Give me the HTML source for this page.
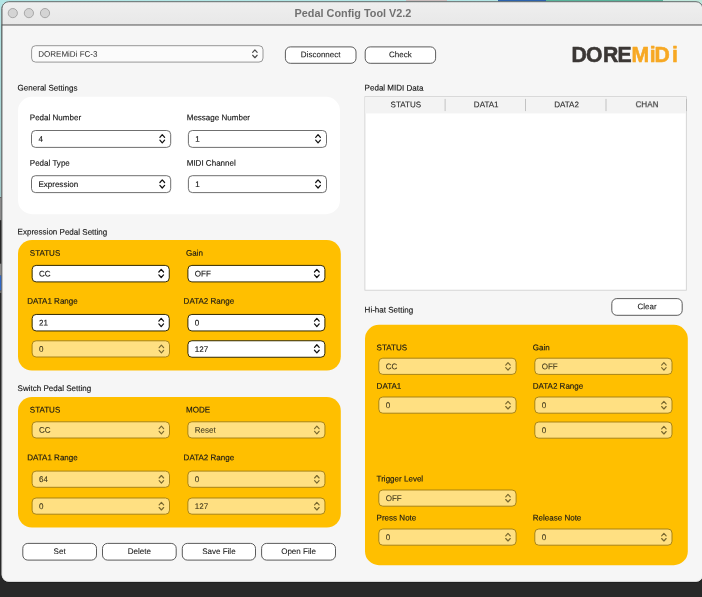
<!DOCTYPE html>
<html><head><meta charset="utf-8"><title>Pedal Config Tool V2.2</title>
<style>
*{box-sizing:border-box;margin:0;padding:0}
html,body{width:702px;height:597px;overflow:hidden}
body{position:relative;background:#282828;font-family:"Liberation Sans",sans-serif;--sx:.988}
svg.bg{position:absolute;left:0;top:0;will-change:transform}
.t{position:absolute;left:0;top:0;white-space:nowrap;font-size:8.15px;line-height:11px;color:#161616;transform-origin:0 0;-webkit-text-stroke:.14px #161616}
.t.c{width:200px;text-align:center;transform-origin:50% 0}
.t.th{color:#282828;-webkit-text-stroke:.1px #282828}
.t.bt{-webkit-text-stroke:.08px #161616}
.t.ds{color:#40381c;-webkit-text-stroke:.1px #40381c}
.t.dv{color:#2e2e2e;-webkit-text-stroke:0}
.txt{position:absolute;left:0;top:0;width:702px;height:597px;will-change:transform}
.title{position:absolute;left:0;width:706px;top:6.5px;text-align:center;font-weight:bold;font-size:11px;line-height:13px;color:#717171;transform:translateY(-.3px) scaleX(.987)}
</style></head><body>
<svg class="bg" width="702" height="597" viewBox="0 0 702 597">
<defs>
<linearGradient id="tb" x1="0" y1="0" x2="0" y2="1"><stop offset="0" stop-color="#efefef"/><stop offset="1" stop-color="#e8e8e8"/></linearGradient>
<linearGradient id="ls" x1="0" y1="0" x2="0" y2="1"><stop offset="0" stop-color="#b4e6e6"/><stop offset="1" stop-color="#9fc6c6"/></linearGradient>
<linearGradient id="bd" x1="0" y1="0" x2="0" y2="1"><stop offset="0" stop-color="#3c4646"/><stop offset="0.5" stop-color="#777"/><stop offset="1" stop-color="#e0e0e0"/></linearGradient>
<clipPath id="wc"><rect x="1.7" y="1.4" width="701.3" height="580.3" rx="7"/></clipPath>
</defs>
<!-- desktop peeking out -->
<rect x="0" y="0" width="702" height="40" fill="#b2e6e5"/>
<rect x="406" y="0" width="41" height="3" fill="#c9bcbc"/>
<rect x="498" y="0" width="48" height="3" fill="#2b62ad"/>
<rect x="546" y="0" width="117" height="3" fill="#58b39a"/>
<rect x="663" y="0" width="39" height="3" fill="#bfe8dc"/>
<rect x="0" y="0" width="4" height="197" fill="url(#ls)"/>
<rect x="0" y="197.4" width="4" height="23" fill="#8a8a8a"/>
<rect x="0" y="220.4" width="4" height="377" fill="#262626"/>
<rect x="0" y="263.7" width="4" height="12" fill="#8a8a8a"/>
<rect x="0" y="275.6" width="4" height="15" fill="#2f66c4"/>
<rect x="0" y="290.5" width="4" height="2.5" fill="#666"/>
<rect x="0" y="293" width="4" height="304" fill="#282828"/>
<!-- window -->
<rect x="1.4" y="2" width="701.9" height="580.6" rx="7.3" fill="#151515"/>
<rect x="1.7" y="1.4" width="701.3" height="580.3" rx="7" fill="#f6f6f6"/>
<g clip-path="url(#wc)">
<rect x="0" y="0" width="706" height="24.4" fill="url(#tb)"/>
<rect x="0" y="24.2" width="706" height="1.5" fill="#858585"/>
</g>
<rect x="2" y="1.7" width="700.7" height="579.7" rx="6.7" fill="none" stroke="url(#bd)" stroke-width="0.8"/>
<g fill="#d4d4d4" stroke="#a0a0a0" stroke-width="0.9">
<circle cx="12.8" cy="13.1" r="4.6"/><circle cx="28.9" cy="13.1" r="4.6"/><circle cx="45" cy="13.1" r="4.6"/>
</g>
<rect x="31.60" y="45.70" width="231.40" height="16.40" rx="4" fill="#fbfbfb" stroke="#8c8c8c" stroke-width="0.9"/>
<path d="M252.65 52.35L254.90 49.85L257.15 52.35M252.65 55.25L254.90 57.75L257.15 55.25" fill="none" stroke="#4a4a4a" stroke-width="1.15" stroke-linecap="round" stroke-linejoin="round"/>
<rect x="285.40" y="46.90" width="70.60" height="16.40" rx="5" fill="#fff" stroke="#4a4a4a" stroke-width="0.9"/>
<rect x="365.20" y="46.90" width="70.40" height="16.40" rx="5" fill="#fff" stroke="#4a4a4a" stroke-width="0.9"/>
<rect x="18" y="96.8" width="322" height="117.4" rx="14" fill="#fff"/>
<rect x="31.50" y="130.50" width="139.20" height="16.90" rx="4" fill="#fff" stroke="#4a4a4a" stroke-width="0.8"/>
<path d="M159.90 137.30L162.25 134.70L164.60 137.30M159.90 140.20L162.25 142.80L164.60 140.20" fill="none" stroke="#111" stroke-width="1.25" stroke-linecap="round" stroke-linejoin="round"/>
<rect x="188.40" y="130.50" width="138.10" height="16.90" rx="4" fill="#fff" stroke="#4a4a4a" stroke-width="0.8"/>
<path d="M315.70 137.30L318.05 134.70L320.40 137.30M315.70 140.20L318.05 142.80L320.40 140.20" fill="none" stroke="#111" stroke-width="1.25" stroke-linecap="round" stroke-linejoin="round"/>
<rect x="31.50" y="175.70" width="139.20" height="16.90" rx="4" fill="#fff" stroke="#4a4a4a" stroke-width="0.8"/>
<path d="M159.90 182.50L162.25 179.90L164.60 182.50M159.90 185.40L162.25 188.00L164.60 185.40" fill="none" stroke="#111" stroke-width="1.25" stroke-linecap="round" stroke-linejoin="round"/>
<rect x="188.40" y="175.70" width="138.10" height="16.90" rx="4" fill="#fff" stroke="#4a4a4a" stroke-width="0.8"/>
<path d="M315.70 182.50L318.05 179.90L320.40 182.50M315.70 185.40L318.05 188.00L320.40 185.40" fill="none" stroke="#111" stroke-width="1.25" stroke-linecap="round" stroke-linejoin="round"/>
<rect x="18" y="240" width="322.8" height="130.6" rx="14" fill="#ffbf00"/>
<rect x="32.15" y="265.40" width="137.10" height="16.50" rx="4" fill="#fff" stroke="#332a00" stroke-width="1"/>
<path d="M158.85 272.00L161.20 269.40L163.55 272.00M158.85 274.90L161.20 277.50L163.55 274.90" fill="none" stroke="#111" stroke-width="1.25" stroke-linecap="round" stroke-linejoin="round"/>
<rect x="187.90" y="265.40" width="137.00" height="16.50" rx="4" fill="#fff" stroke="#332a00" stroke-width="1"/>
<path d="M314.50 272.00L316.85 269.40L319.20 272.00M314.50 274.90L316.85 277.50L319.20 274.90" fill="none" stroke="#111" stroke-width="1.25" stroke-linecap="round" stroke-linejoin="round"/>
<rect x="32.15" y="314.45" width="137.10" height="16.50" rx="4" fill="#fff" stroke="#332a00" stroke-width="1"/>
<path d="M158.85 321.05L161.20 318.45L163.55 321.05M158.85 323.95L161.20 326.55L163.55 323.95" fill="none" stroke="#111" stroke-width="1.25" stroke-linecap="round" stroke-linejoin="round"/>
<rect x="187.90" y="314.45" width="137.00" height="16.50" rx="4" fill="#fff" stroke="#332a00" stroke-width="1"/>
<path d="M314.50 321.05L316.85 318.45L319.20 321.05M314.50 323.95L316.85 326.55L319.20 323.95" fill="none" stroke="#111" stroke-width="1.25" stroke-linecap="round" stroke-linejoin="round"/>
<rect x="32.10" y="340.80" width="137.40" height="16.20" rx="4" fill="#ffe082" stroke="#a37f14" stroke-width="0.95"/>
<path d="M159.15 347.70L161.40 345.20L163.65 347.70M159.15 350.30L161.40 352.80L163.65 350.30" fill="none" stroke="#78672e" stroke-width="1.15" stroke-linecap="round" stroke-linejoin="round"/>
<rect x="187.90" y="340.75" width="137.00" height="16.50" rx="4" fill="#fff" stroke="#332a00" stroke-width="1"/>
<path d="M314.50 347.35L316.85 344.75L319.20 347.35M314.50 350.25L316.85 352.85L319.20 350.25" fill="none" stroke="#111" stroke-width="1.25" stroke-linecap="round" stroke-linejoin="round"/>
<rect x="18" y="397.0" width="322.8" height="130.5" rx="14" fill="#ffbf00"/>
<rect x="32.10" y="421.80" width="137.40" height="16.20" rx="4" fill="#ffe082" stroke="#a37f14" stroke-width="0.95"/>
<path d="M159.15 428.70L161.40 426.20L163.65 428.70M159.15 431.30L161.40 433.80L163.65 431.30" fill="none" stroke="#78672e" stroke-width="1.15" stroke-linecap="round" stroke-linejoin="round"/>
<rect x="187.85" y="421.80" width="137.10" height="16.20" rx="4" fill="#ffe082" stroke="#a37f14" stroke-width="0.95"/>
<path d="M314.60 428.70L316.85 426.20L319.10 428.70M314.60 431.30L316.85 433.80L319.10 431.30" fill="none" stroke="#78672e" stroke-width="1.15" stroke-linecap="round" stroke-linejoin="round"/>
<rect x="32.10" y="471.10" width="137.40" height="16.20" rx="4" fill="#ffe082" stroke="#a37f14" stroke-width="0.95"/>
<path d="M159.15 478.00L161.40 475.50L163.65 478.00M159.15 480.60L161.40 483.10L163.65 480.60" fill="none" stroke="#78672e" stroke-width="1.15" stroke-linecap="round" stroke-linejoin="round"/>
<rect x="187.85" y="471.10" width="137.10" height="16.20" rx="4" fill="#ffe082" stroke="#a37f14" stroke-width="0.95"/>
<path d="M314.60 478.00L316.85 475.50L319.10 478.00M314.60 480.60L316.85 483.10L319.10 480.60" fill="none" stroke="#78672e" stroke-width="1.15" stroke-linecap="round" stroke-linejoin="round"/>
<rect x="32.10" y="498.00" width="137.40" height="16.20" rx="4" fill="#ffe082" stroke="#a37f14" stroke-width="0.95"/>
<path d="M159.15 504.90L161.40 502.40L163.65 504.90M159.15 507.50L161.40 510.00L163.65 507.50" fill="none" stroke="#78672e" stroke-width="1.15" stroke-linecap="round" stroke-linejoin="round"/>
<rect x="187.85" y="498.00" width="137.10" height="16.20" rx="4" fill="#ffe082" stroke="#a37f14" stroke-width="0.95"/>
<path d="M314.60 504.90L316.85 502.40L319.10 504.90M314.60 507.50L316.85 510.00L319.10 507.50" fill="none" stroke="#78672e" stroke-width="1.15" stroke-linecap="round" stroke-linejoin="round"/>
<rect x="22.80" y="543.40" width="73.70" height="16.70" rx="5" fill="#fff" stroke="#4a4a4a" stroke-width="0.9"/>
<rect x="102.50" y="543.40" width="73.70" height="16.70" rx="5" fill="#fff" stroke="#4a4a4a" stroke-width="0.9"/>
<rect x="182.30" y="543.40" width="73.20" height="16.70" rx="5" fill="#fff" stroke="#4a4a4a" stroke-width="0.9"/>
<rect x="261.60" y="543.40" width="73.90" height="16.70" rx="5" fill="#fff" stroke="#4a4a4a" stroke-width="0.9"/>
<rect x="364.9" y="96.7" width="321.4" height="193.5" fill="#fff" stroke="#cdcdcd" stroke-width="0.8"/>
<rect x="365.3" y="97.1" width="320.6" height="16.3" fill="#f3f3f3"/>
<rect x="444.65" y="98.9" width="0.9" height="12.2" fill="#bdbdbd"/>
<rect x="525.10" y="98.9" width="0.9" height="12.2" fill="#bdbdbd"/>
<rect x="605.55" y="98.9" width="0.9" height="12.2" fill="#bdbdbd"/>
<rect x="686.00" y="98.9" width="0.9" height="12.2" fill="#bdbdbd"/>
<rect x="611.80" y="298.60" width="70.40" height="16.70" rx="5" fill="#fff" stroke="#4a4a4a" stroke-width="0.9"/>
<rect x="365.0" y="324.8" width="322.8" height="240.4" rx="14" fill="#ffbf00"/>
<rect x="378.80" y="358.20" width="137.30" height="16.20" rx="4" fill="#ffe082" stroke="#a37f14" stroke-width="0.95"/>
<path d="M505.75 365.10L508.00 362.60L510.25 365.10M505.75 367.70L508.00 370.20L510.25 367.70" fill="none" stroke="#78672e" stroke-width="1.15" stroke-linecap="round" stroke-linejoin="round"/>
<rect x="534.80" y="358.20" width="137.20" height="16.20" rx="4" fill="#ffe082" stroke="#a37f14" stroke-width="0.95"/>
<path d="M661.65 365.10L663.90 362.60L666.15 365.10M661.65 367.70L663.90 370.20L666.15 367.70" fill="none" stroke="#78672e" stroke-width="1.15" stroke-linecap="round" stroke-linejoin="round"/>
<rect x="378.80" y="397.00" width="137.30" height="16.20" rx="4" fill="#ffe082" stroke="#a37f14" stroke-width="0.95"/>
<path d="M505.75 403.90L508.00 401.40L510.25 403.90M505.75 406.50L508.00 409.00L510.25 406.50" fill="none" stroke="#78672e" stroke-width="1.15" stroke-linecap="round" stroke-linejoin="round"/>
<rect x="534.80" y="397.00" width="137.20" height="16.20" rx="4" fill="#ffe082" stroke="#a37f14" stroke-width="0.95"/>
<path d="M661.65 403.90L663.90 401.40L666.15 403.90M661.65 406.50L663.90 409.00L666.15 406.50" fill="none" stroke="#78672e" stroke-width="1.15" stroke-linecap="round" stroke-linejoin="round"/>
<rect x="534.80" y="422.00" width="137.20" height="16.20" rx="4" fill="#ffe082" stroke="#a37f14" stroke-width="0.95"/>
<path d="M661.65 428.90L663.90 426.40L666.15 428.90M661.65 431.50L663.90 434.00L666.15 431.50" fill="none" stroke="#78672e" stroke-width="1.15" stroke-linecap="round" stroke-linejoin="round"/>
<rect x="378.80" y="490.00" width="137.30" height="16.20" rx="4" fill="#ffe082" stroke="#a37f14" stroke-width="0.95"/>
<path d="M505.75 496.90L508.00 494.40L510.25 496.90M505.75 499.50L508.00 502.00L510.25 499.50" fill="none" stroke="#78672e" stroke-width="1.15" stroke-linecap="round" stroke-linejoin="round"/>
<rect x="378.80" y="529.00" width="137.30" height="16.20" rx="4" fill="#ffe082" stroke="#a37f14" stroke-width="0.95"/>
<path d="M505.75 535.90L508.00 533.40L510.25 535.90M505.75 538.50L508.00 541.00L510.25 538.50" fill="none" stroke="#78672e" stroke-width="1.15" stroke-linecap="round" stroke-linejoin="round"/>
<rect x="534.80" y="529.00" width="137.20" height="16.20" rx="4" fill="#ffe082" stroke="#a37f14" stroke-width="0.95"/>
<path d="M661.65 535.90L663.90 533.40L666.15 535.90M661.65 538.50L663.90 541.00L666.15 538.50" fill="none" stroke="#78672e" stroke-width="1.15" stroke-linecap="round" stroke-linejoin="round"/>
<text transform="translate(0,62.3) scale(0.95,1)" x="601.58 616.84 634.63 649.89" y="0" font-family="Liberation Sans, sans-serif" font-weight="bold" font-size="22.3" fill="#3b3735" stroke="#3b3735" stroke-width="0.6" stroke-linejoin="round">DORE</text><text transform="translate(0,62.3) scale(0.95,1)" x="664.74 683.89 688.95 707.37" y="0" font-family="Liberation Sans, sans-serif" font-weight="bold" font-size="22.3" fill="#f7a823" stroke="#f7a823" stroke-width="0.6" stroke-linejoin="round">MiDi</text>
</svg>
<div class="txt">
<div class="title">Pedal Config Tool V2.2</div>
<div class="t dv" style="transform:translate(38.20px,48.80px) scale(var(--sx),1) rotate(.04deg)">DOREMiDi FC-3</div>
<div class="t bt c" style="transform:translate(220.70px,49.35px) scale(var(--sx),1) rotate(.04deg)">Disconnect</div>
<div class="t bt c" style="transform:translate(300.40px,49.35px) scale(var(--sx),1) rotate(.04deg)">Check</div>
<div class="t" style="transform:translate(17.60px,82.60px) scale(var(--sx),1) rotate(.04deg)">General Settings</div>
<div class="t" style="transform:translate(29.80px,112.30px) scale(var(--sx),1) rotate(.04deg)">Pedal Number</div>
<div class="t" style="transform:translate(186.70px,112.30px) scale(var(--sx),1) rotate(.04deg)">Message Number</div>
<div class="t" style="transform:translate(38.40px,133.85px) scale(var(--sx),1) rotate(.04deg)">4</div>
<div class="t" style="transform:translate(195.30px,133.85px) scale(var(--sx),1) rotate(.04deg)">1</div>
<div class="t" style="transform:translate(29.80px,157.70px) scale(var(--sx),1) rotate(.04deg)">Pedal Type</div>
<div class="t" style="transform:translate(186.70px,157.70px) scale(var(--sx),1) rotate(.04deg)">MIDI Channel</div>
<div class="t" style="transform:translate(38.40px,179.05px) scale(var(--sx),1) rotate(.04deg)">Expression</div>
<div class="t" style="transform:translate(195.30px,179.05px) scale(var(--sx),1) rotate(.04deg)">1</div>
<div class="t" style="transform:translate(17.60px,226.60px) scale(var(--sx),1) rotate(.04deg)">Expression Pedal Setting</div>
<div class="t" style="transform:translate(29.80px,247.70px) scale(var(--sx),1) rotate(.04deg)">STATUS</div>
<div class="t" style="transform:translate(186.10px,247.70px) scale(var(--sx),1) rotate(.04deg)">Gain</div>
<div class="t" style="transform:translate(39.00px,268.55px) scale(var(--sx),1) rotate(.04deg)">CC</div>
<div class="t" style="transform:translate(194.75px,268.55px) scale(var(--sx),1) rotate(.04deg)">OFF</div>
<div class="t" style="transform:translate(27.20px,295.70px) scale(var(--sx),1) rotate(.04deg)">DATA1 Range</div>
<div class="t" style="transform:translate(183.60px,295.70px) scale(var(--sx),1) rotate(.04deg)">DATA2 Range</div>
<div class="t" style="transform:translate(39.00px,317.60px) scale(var(--sx),1) rotate(.04deg)">21</div>
<div class="t" style="transform:translate(194.75px,317.60px) scale(var(--sx),1) rotate(.04deg)">0</div>
<div class="t ds" style="transform:translate(39.00px,343.80px) scale(var(--sx),1) rotate(.04deg)">0</div>
<div class="t" style="transform:translate(194.75px,343.90px) scale(var(--sx),1) rotate(.04deg)">127</div>
<div class="t" style="transform:translate(17.60px,383.00px) scale(var(--sx),1) rotate(.04deg)">Switch Pedal Setting</div>
<div class="t" style="transform:translate(29.80px,404.60px) scale(var(--sx),1) rotate(.04deg)">STATUS</div>
<div class="t" style="transform:translate(186.10px,404.60px) scale(var(--sx),1) rotate(.04deg)">MODE</div>
<div class="t ds" style="transform:translate(39.00px,424.80px) scale(var(--sx),1) rotate(.04deg)">CC</div>
<div class="t ds" style="transform:translate(194.75px,424.80px) scale(var(--sx),1) rotate(.04deg)">Reset</div>
<div class="t" style="transform:translate(27.20px,452.30px) scale(var(--sx),1) rotate(.04deg)">DATA1 Range</div>
<div class="t" style="transform:translate(183.60px,452.30px) scale(var(--sx),1) rotate(.04deg)">DATA2 Range</div>
<div class="t ds" style="transform:translate(39.00px,474.10px) scale(var(--sx),1) rotate(.04deg)">64</div>
<div class="t ds" style="transform:translate(194.75px,474.10px) scale(var(--sx),1) rotate(.04deg)">0</div>
<div class="t ds" style="transform:translate(39.00px,501.00px) scale(var(--sx),1) rotate(.04deg)">0</div>
<div class="t ds" style="transform:translate(194.75px,501.00px) scale(var(--sx),1) rotate(.04deg)">127</div>
<div class="t bt c" style="transform:translate(-40.35px,546.00px) scale(var(--sx),1) rotate(.04deg)">Set</div>
<div class="t bt c" style="transform:translate(39.35px,546.00px) scale(var(--sx),1) rotate(.04deg)">Delete</div>
<div class="t bt c" style="transform:translate(118.90px,546.00px) scale(var(--sx),1) rotate(.04deg)">Save File</div>
<div class="t bt c" style="transform:translate(198.55px,546.00px) scale(var(--sx),1) rotate(.04deg)">Open File</div>
<div class="t" style="transform:translate(364.60px,82.60px) scale(var(--sx),1) rotate(.04deg)">Pedal MIDI Data</div>
<div class="t th c" style="transform:translate(305.80px,99.30px) scale(var(--sx),1) rotate(.04deg)">STATUS</div>
<div class="t th c" style="transform:translate(386.20px,99.30px) scale(var(--sx),1) rotate(.04deg)">DATA1</div>
<div class="t th c" style="transform:translate(466.60px,99.30px) scale(var(--sx),1) rotate(.04deg)">DATA2</div>
<div class="t th c" style="transform:translate(547.00px,99.30px) scale(var(--sx),1) rotate(.04deg)">CHAN</div>
<div class="t bt c" style="transform:translate(547.00px,301.20px) scale(var(--sx),1) rotate(.04deg)">Clear</div>
<div class="t" style="transform:translate(364.60px,304.60px) scale(var(--sx),1) rotate(.04deg)">Hi-hat Setting</div>
<div class="t" style="transform:translate(376.60px,342.30px) scale(var(--sx),1) rotate(.04deg)">STATUS</div>
<div class="t" style="transform:translate(532.70px,342.30px) scale(var(--sx),1) rotate(.04deg)">Gain</div>
<div class="t ds" style="transform:translate(385.70px,361.20px) scale(var(--sx),1) rotate(.04deg)">CC</div>
<div class="t ds" style="transform:translate(541.70px,361.20px) scale(var(--sx),1) rotate(.04deg)">OFF</div>
<div class="t" style="transform:translate(376.60px,380.70px) scale(var(--sx),1) rotate(.04deg)">DATA1</div>
<div class="t" style="transform:translate(532.70px,380.70px) scale(var(--sx),1) rotate(.04deg)">DATA2 Range</div>
<div class="t ds" style="transform:translate(385.70px,400.00px) scale(var(--sx),1) rotate(.04deg)">0</div>
<div class="t ds" style="transform:translate(541.70px,400.00px) scale(var(--sx),1) rotate(.04deg)">0</div>
<div class="t ds" style="transform:translate(541.70px,425.00px) scale(var(--sx),1) rotate(.04deg)">0</div>
<div class="t" style="transform:translate(376.60px,473.50px) scale(var(--sx),1) rotate(.04deg)">Trigger Level</div>
<div class="t ds" style="transform:translate(385.70px,493.00px) scale(var(--sx),1) rotate(.04deg)">OFF</div>
<div class="t" style="transform:translate(376.60px,512.40px) scale(var(--sx),1) rotate(.04deg)">Press Note</div>
<div class="t" style="transform:translate(532.70px,512.40px) scale(var(--sx),1) rotate(.04deg)">Release Note</div>
<div class="t ds" style="transform:translate(385.70px,532.00px) scale(var(--sx),1) rotate(.04deg)">0</div>
<div class="t ds" style="transform:translate(541.70px,532.00px) scale(var(--sx),1) rotate(.04deg)">0</div>
</div>
</body></html>
